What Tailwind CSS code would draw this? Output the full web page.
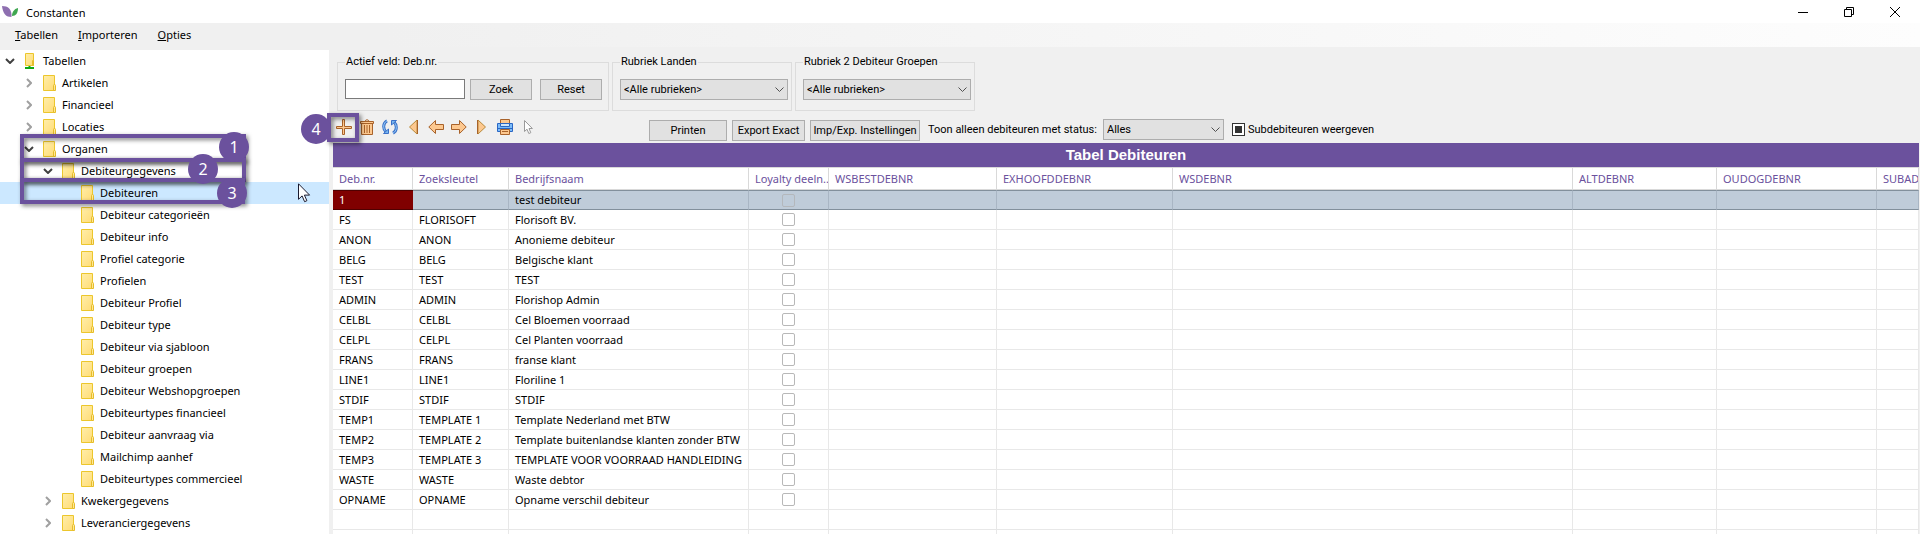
<!DOCTYPE html>
<html lang="nl">
<head>
<meta charset="utf-8">
<title>Constanten</title>
<script src="https://cdn.jsdelivr.net/npm/@tailwindcss/browser@4"></script>
</head>
<body class="min-h-screen flex flex-col bg-[#f0f0f0] text-black text-[11px] leading-4 font-['Noto_Sans',sans-serif]">

<svg class="absolute w-0 h-0" aria-hidden="true">
  <defs>
    <linearGradient id="fold" x1="0" y1="0" x2="1" y2="1"><stop offset="0" stop-color="#ffeeaa"/><stop offset="1" stop-color="#ffdc76"/></linearGradient>
    <symbol id="folder" viewBox="0 0 13 16"><path d="M.5.5h11v15H.5z" fill="url(#fold)" stroke="#ecc62c"/><path d="M10.500 10.500q0-1 1-1t1 1v5h-2z" fill="#ffe794" stroke="#e6bd2a"/></symbol>
    <symbol id="down" viewBox="0 0 10 6"><path d="M1 1l4 4 4-4" fill="none" stroke="#404040" stroke-width="2"/></symbol>
    <symbol id="right" viewBox="0 0 6 10"><path d="M1 1l4 4-4 4" fill="none" stroke="#a0a0a0" stroke-width="2"/></symbol>
  </defs>
</svg>

<header class="h-[23px] shrink-0 bg-white flex items-center justify-between">
  <div class="flex items-center gap-[7px] pl-[2px]">
    <svg class="w-[17px] h-[12px]" viewBox="0 0 17 12"><path d="M0 0C6 0 10 3 9.500 11C4 11 1 8 0 0z" fill="#8e6fb0"/><path d="M16 2C16 7 14 10 10 10C10 6 12 3 16 2z" fill="#3fa650"/></svg>
    <h1 class="leading-5 pt-[2px]">Constanten</h1>
  </div>
  <div class="flex items-center gap-[34px] pr-[19px]">
    <button aria-label="Minimaliseren"><svg class="w-[12px] h-[12px]" viewBox="0 0 12 12"><path d="M1 6.500h10" stroke="#000"/></svg></button>
    <button aria-label="Verkleinen"><svg class="w-[12px] h-[12px]" viewBox="0 0 12 12"><path d="M1.500 3.500h7v7h-7zM3.500 3.500v-2h7v7h-2" fill="none" stroke="#000"/></svg></button>
    <button aria-label="Sluiten"><svg class="w-[12px] h-[12px]" viewBox="0 0 12 12"><path d="M1 1l10 10M11 1L1 11" stroke="#000"/></svg></button>
  </div>
</header>

<nav class="h-6 shrink-0 flex items-center gap-5 pl-[15px] bg-linear-to-r from-[#f0f0f0] from-20% to-[#fdfdfd]">
  <button><u>T</u>abellen</button>
  <button><u>I</u>mporteren</button>
  <button><u>O</u>pties</button>
</nav>

<div class="flex-1 flex">
  <aside class="relative w-[329px] shrink-0 mt-[3px] bg-white">
    <ul id="tree"></ul>
    <div class="absolute left-[20px] top-[84px] w-[226px] h-[28px] border-4 border-[#6b519d] drop-shadow-[2px_2px_2px_rgba(0,0,0,0.5)]"></div>
    <div class="absolute left-[20px] top-[108px] w-[226px] h-[24px] border-4 border-[#6b519d] drop-shadow-[2px_2px_2px_rgba(0,0,0,0.5)]"></div>
    <div class="absolute left-[20px] top-[128px] w-[225px] h-[26px] border-4 border-[#6b519d] drop-shadow-[2px_2px_2px_rgba(0,0,0,0.5)]"></div>
    <div class="absolute left-[219px] top-[82px] size-[30px] rounded-full bg-[#6b519d] text-white text-[16px] flex items-center justify-center">1</div>
    <div class="absolute left-[188px] top-[104px] size-[30px] rounded-full bg-[#6b519d] text-white text-[16px] flex items-center justify-center">2</div>
    <div class="absolute left-[217px] top-[128px] size-[30px] rounded-full bg-[#6b519d] text-white text-[16px] flex items-center justify-center">3</div>
    <div class="absolute left-[301px] top-[64px] size-[30px] rounded-full bg-[#6b519d] text-white text-[16px] flex items-center justify-center z-10">4</div>
    <svg class="absolute left-[298px] top-[133px] w-[13px] h-[20px]" viewBox="0 0 13 20"><path d="M.5.8v15.500l3.600-3.400 2.500 5.800 2.300-1-2.500-5.600h5.200z" fill="#fff" stroke="#1a1a2e"/></svg>
  </aside>

  <main class="flex-1 min-w-0 flex flex-col pl-1 pr-px">
    <div class="flex gap-[3px] pl-1 pt-[7px] font-[Roboto,'Liberation_Sans',sans-serif]">
      <fieldset class="w-[272px] h-[57px] border border-[#dcdcdc] pl-[7px]">
        <legend class="px-px leading-4"><label for="zoekveld">Actief veld: Deb.nr.</label></legend>
        <div class="flex pt-[9px]">
          <input id="zoekveld" type="text" class="w-[120px] h-5 bg-white border border-[#7a7a7a] px-1 mr-[5px]">
          <button class="w-[62px] h-[21px] bg-[#e1e1e1] border border-[#adadad] mr-2">Zoek</button>
          <button class="w-[62px] h-[21px] bg-[#e1e1e1] border border-[#adadad]">Reset</button>
        </div>
      </fieldset>
      <fieldset class="w-[180px] h-[57px] border border-[#dcdcdc] pl-[7px]">
        <legend class="px-px leading-4"><label for="landen">Rubriek Landen</label></legend>
        <div class="relative mt-[9px] w-[168px]">
          <select id="landen" class="appearance-none block w-full h-[21px] bg-[#e1e1e1] border border-[#adadad] pl-[3px]"><option>&lt;Alle rubrieken&gt;</option></select>
          <svg class="absolute right-1 top-2 w-[9px] h-[6px] pointer-events-none" viewBox="0 0 9 6"><path d="M.5.5l4 4 4-4" fill="none" stroke="#505050"/></svg>
        </div>
      </fieldset>
      <fieldset class="w-[180px] h-[57px] border border-[#dcdcdc] pl-[7px]">
        <legend class="px-px leading-4"><label for="groepen">Rubriek 2 Debiteur Groepen</label></legend>
        <div class="relative mt-[9px] w-[168px]">
          <select id="groepen" class="appearance-none block w-full h-[21px] bg-[#e1e1e1] border border-[#adadad] pl-[3px]"><option>&lt;Alle rubrieken&gt;</option></select>
          <svg class="absolute right-1 top-2 w-[9px] h-[6px] pointer-events-none" viewBox="0 0 9 6"><path d="M.5.5l4 4 4-4" fill="none" stroke="#505050"/></svg>
        </div>
      </fieldset>
    </div>

    <div class="flex items-center h-8 font-[Roboto,'Liberation_Sans',sans-serif]">
      <div class="relative flex items-center gap-[7px] pl-[3px] w-[316px] shrink-0">
        <button aria-label="Toevoegen"><svg class="size-4" viewBox="0 0 16 16"><path d="M6.500.5h2v7h7v2h-7v6h-2v-6h-6v-2h6z" fill="#fdc88f" stroke="#a8622a"/></svg></button>
        <button aria-label="Verwijderen"><svg class="size-4" viewBox="0 0 16 16"><path d="M5.500 2.500q2.500-3.500 5 0" fill="none" stroke="#a8622a"/><path d="M1.500 2.500h13v2h-13zM2.500 4.500h11v11h-11z" fill="#fdc88f" stroke="#a8622a"/><path d="M5.500 6v8M8 6v8M10.500 6v8" stroke="#a8622a"/></svg></button>
        <button aria-label="Vernieuwen"><svg class="size-4" viewBox="0 0 16 16"><path d="M5 1.800C.8 4 .8 10 4 12.800M11 14.200C15.200 12 15.200 6 12 3.200" fill="none" stroke="#3a70c8" stroke-width="3"/><path d="M5 1.800C.8 4 .8 10 4 12.800M11 14.200C15.200 12 15.200 6 12 3.200" fill="none" stroke="#9ad0fa"/><path d="M1.500 14.500h5V10zM14.500 1.500h-5V6z" fill="#78b8f0" stroke="#3a70c8"/></svg></button>
        <button aria-label="Eerste"><svg class="size-4" viewBox="0 0 16 16"><path d="M12 1v14L4.500 8z" fill="#fdc88f" stroke="#b98a3a"/><path d="M12.500 1v14" stroke="#a8622a"/></svg></button>
        <button aria-label="Vorige"><svg class="size-4" viewBox="0 0 16 16"><path d="M7.500 1.500v4h8v5h-8v4L.8 8z" fill="#fdc88f" stroke="#a8622a"/></svg></button>
        <button aria-label="Volgende"><svg class="size-4" viewBox="0 0 16 16"><path d="M8.500 1.500v4h-8v5h8v4L15.200 8z" fill="#fdc88f" stroke="#a8622a"/></svg></button>
        <button aria-label="Laatste"><svg class="size-4" viewBox="0 0 16 16"><path d="M4 1v14L11.500 8z" fill="#fdc88f" stroke="#b98a3a"/><path d="M3.500 1v14" stroke="#a8622a"/></svg></button>
        <button aria-label="Afdrukken"><svg class="size-4" viewBox="0 0 16 16"><path d="M3.500.5h9v5h-9z" fill="#fdc88f" stroke="#a8622a"/><path d="M.5 4.500h15v8H.5z" fill="#7cbcf8" stroke="#2b66c4"/><path d="M3.500 4.500h9v3h-9z" fill="#cfe6fb" stroke="#2b66c4"/><path d="M1 9.500h14" stroke="#2b66c4"/><path d="M3.500 10.500h9v5h-9z" fill="#fdc88f" stroke="#a8622a"/><path d="M5 12.500h6" stroke="#a8622a"/></svg></button>
        <button aria-label="Selecteren"><svg class="size-4" viewBox="0 0 16 16"><path d="M4.500 1.500v11l2.500-2.300 1.800 4.300 2-.8-1.800-4.200h3.400z" fill="#fff" stroke="#9a9a9a"/></svg></button>
        <div class="absolute left-[-6px] top-[-6px] w-[32px] h-[29px] border-4 border-[#6b519d] drop-shadow-[2px_2px_2px_rgba(0,0,0,0.5)] pointer-events-none"></div>
      </div>
      <button class="w-[78px] h-[21px] mt-[7px] mr-[5px] bg-[#e1e1e1] border border-[#adadad] whitespace-nowrap">Printen</button>
      <button class="w-[73px] h-[21px] mt-[7px] mr-[5px] bg-[#e1e1e1] border border-[#adadad] whitespace-nowrap">Export Exact</button>
      <button class="w-[110px] h-[21px] mt-[7px] mr-2 bg-[#e1e1e1] border border-[#adadad] whitespace-nowrap">Imp/Exp. Instellingen</button>
      <label for="status" class="w-[175px] mt-[5px] whitespace-nowrap">Toon alleen debiteuren met status:</label>
      <div class="relative w-[121px] mt-[5px] mr-2">
        <select id="status" class="appearance-none block w-full h-[21px] bg-[#e1e1e1] border border-[#adadad] pl-[3px]"><option>Alles</option></select>
        <svg class="absolute right-1 top-2 w-[9px] h-[6px] pointer-events-none" viewBox="0 0 9 6"><path d="M.5.5l4 4 4-4" fill="none" stroke="#505050"/></svg>
      </div>
      <div class="mt-[5px] flex items-center gap-[3px]">
        <input id="sub" type="checkbox" class="appearance-none size-[13px] bg-[#333] border border-[#333] shadow-[inset_0_0_0_2px_#fff]">
        <label for="sub" class="whitespace-nowrap">Subdebiteuren weergeven</label>
      </div>
    </div>

    <h2 class="h-6 shrink-0 bg-[#6b519d] text-white text-[15px] leading-6 font-bold text-center font-['Liberation_Sans',Arial,sans-serif]">Tabel Debiteuren</h2>
    <table class="w-full table-fixed border-separate border-spacing-0 bg-white">
      <colgroup><col class="w-[80px]"><col class="w-[96px]"><col class="w-[240px]"><col class="w-[80px]"><col class="w-[168px]"><col class="w-[176px]"><col class="w-[400px]"><col class="w-[144px]"><col class="w-[160px]"><col></colgroup>
      <thead><tr id="head"></tr></thead>
      <tbody id="rows"></tbody>
    </table>
  </main>
</div>

<script>
// [depth, label, state] where state is "open", "closed" or empty for a leaf
const nodes = [
  [0,'Tabellen','open'],[1,'Artikelen','closed'],[1,'Financieel','closed'],[1,'Locaties','closed'],[1,'Organen','open'],
  [2,'Debiteurgegevens','open'],[3,'Debiteuren',''],[3,'Debiteur categorieën',''],[3,'Debiteur info',''],[3,'Profiel categorie',''],
  [3,'Profielen',''],[3,'Debiteur Profiel',''],[3,'Debiteur type',''],[3,'Debiteur via sjabloon',''],[3,'Debiteur groepen',''],
  [3,'Debiteur Webshopgroepen',''],[3,'Debiteurtypes financieel',''],[3,'Debiteur aanvraag via',''],[3,'Mailchimp aanhef',''],
  [3,'Debiteurtypes commercieel',''],[2,'Kwekergegevens','closed'],[2,'Leveranciergegevens','closed']];
const pads = ['pl-[5px]','pl-[24px]','pl-[43px]','pl-[62px]'];
const arrows = {
  open: '<svg class="w-[10px] h-[6px]"><use href="#down"/></svg>',
  closed: '<svg class="w-[6px] h-[10px]"><use href="#right"/></svg>',
  '': ''};
document.getElementById('tree').innerHTML = nodes.map(([d, t, s], i) => `
  <li class="h-[22px] flex items-center ${pads[d]} ${t === 'Debiteuren' ? 'bg-[#cce8ff]' : ''}">
    <span class="w-[10px] mr-[9px] flex justify-center">${arrows[s]}</span>
    ${i === 0
      ? '<svg class="w-[13px] h-[16px] mr-[6px]" viewBox="0 0 13 16"><path d="M1.500.5h8v12h-8z" fill="url(#fold)" stroke="#ecc62c"/><path d="M8.500 7.500h1v5h-1z" fill="#ffe794" stroke="#e6bd2a"/><path d="M1 15h9M5.500 13v2" stroke="#12a812" stroke-width="2"/></svg>'
      : '<svg class="w-[13px] h-[16px] mr-[6px]"><use href="#folder"/></svg>'}
    <span class="whitespace-nowrap">${t}</span>
  </li>`).join('');

const cols = ['Deb.nr.','Zoeksleutel','Bedrijfsnaam','Loyalty deeln..','WSBESTDEBNR','EXHOOFDDEBNR','WSDEBNR','ALTDEBNR','OUDOGDEBNR','SUBAD'];
document.getElementById('head').innerHTML = cols.map(c =>
  `<th class="h-[23px] p-0 pl-[6px] text-left font-normal text-[#6b519d] text-[11px] whitespace-nowrap overflow-hidden border-t border-b border-r border-[#d9d9d9]">${c}</th>`).join('');

const data = [
  ['1','','test debiteur'],['FS','FLORISOFT','Florisoft BV.'],['ANON','ANON','Anonieme debiteur'],['BELG','BELG','Belgische klant'],
  ['TEST','TEST','TEST'],['ADMIN','ADMIN','Florishop Admin'],['CELBL','CELBL','Cel Bloemen voorraad'],['CELPL','CELPL','Cel Planten voorraad'],
  ['FRANS','FRANS','franse klant'],['LINE1','LINE1','Floriline 1'],['STDIF','STDIF','STDIF'],['TEMP1','TEMPLATE 1','Template Nederland met BTW'],
  ['TEMP2','TEMPLATE 2','Template buitenlandse klanten zonder BTW'],['TEMP3','TEMPLATE 3','TEMPLATE VOOR VOORRAAD HANDLEIDING'],
  ['WASTE','WASTE','Waste debtor'],['OPNAME','OPNAME','Opname verschil debiteur'],['','',''],null];
document.getElementById('rows').innerHTML = data.map((r, i) => '<tr>' + cols.map((c, j) => {
  if (!r) return '<td class="h-1 p-0 border-r border-[#e8e8e8]"></td>';
  const look = i > 0 ? 'border-b border-r border-[#e8e8e8]'
    : j === 0 ? 'bg-[#800000] text-white border-y border-[#500000]'
    : 'bg-[#bfccd9] border-y border-r border-y-[#82909c] border-r-[#a9b6c4]';
  const box = j === 3 && i < 16
    ? `<input type="checkbox" aria-label="Loyalty deelname ${r[0]}" class="appearance-none block mx-auto size-[13px] rounded-[2px] border ${i ? 'border-[#b8b8b8] bg-white' : 'border-[#b4b8bc]'}">` : '';
  return `<td class="h-5 p-0 ${j === 3 ? '' : 'pl-[6px]'} text-[11px] leading-4 whitespace-nowrap overflow-hidden ${look}">${j < 3 ? r[j] : box}</td>`;
}).join('') + '</tr>').join('');
</script>
</body>
</html>
